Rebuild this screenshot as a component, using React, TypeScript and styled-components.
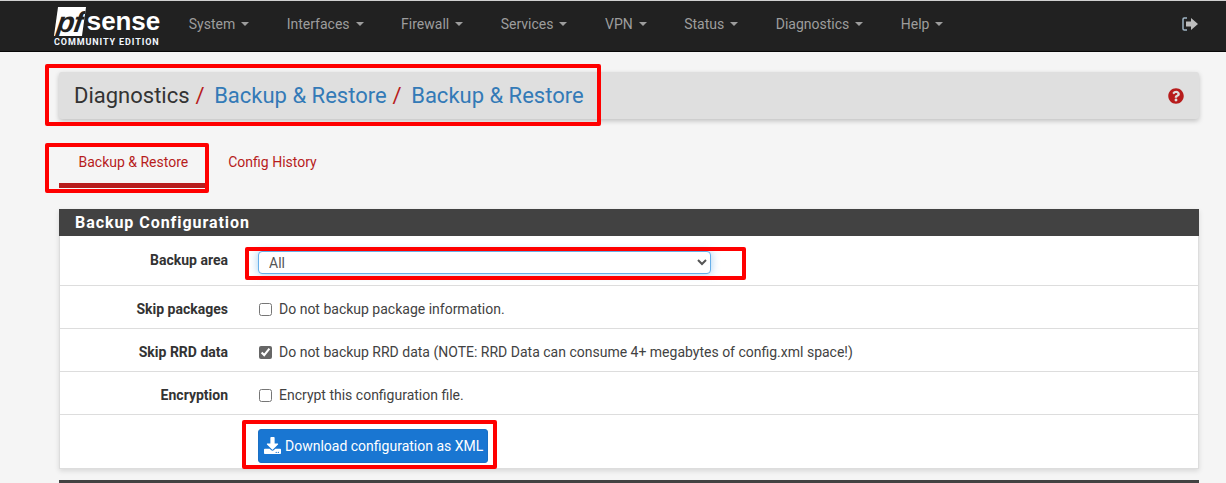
import React from 'react';
import styled, { createGlobalStyle } from 'styled-components';
import { FaDownload, FaQuestionCircle } from 'react-icons/fa';

const GlobalStyle = createGlobalStyle`
    html, body {
        margin: 0;
        padding: 0;
        background: #f5f5f5;
        font-family: Roboto, "Liberation Sans", sans-serif;
        font-size: 14px;
        color: #333;
        overflow: hidden;
    }
`;

const Page = styled.div`
    position: relative;
    width: 1226px;
    height: 483px;
    overflow: hidden;
`;

const Navbar = styled.nav`
    display: flex;
    align-items: center;
    box-sizing: border-box;
    height: 51px;
    margin-top: 1px;
    padding: 0 27px 4px 54px;
    background: #212121;
    border-bottom: 1px solid #080808;
    box-shadow: 0 -1px 0 #d0d0d0;
`;

const Logo = styled.div`
    display: flex;
    flex-direction: column;
    width: 106px;
    margin: 6px 10px 0 0;
    color: #fff;
`;

const LogoTop = styled.div`
    display: flex;
    align-items: center;
    height: 29px;
    padding-left: 2px;
`;

const LogoBox = styled.span`
    display: flex;
    align-items: center;
    justify-content: center;
    width: 28px;
    height: 29px;
    overflow: hidden;
    background: #fff;
    color: #212121;
    font: italic 700 29px/26px "Liberation Sans", sans-serif;
    letter-spacing: -1px;
    transform: skewX(-8deg);
`;

const LogoWord = styled.span`
    margin-left: 3px;
    font: 700 26px/28px "Liberation Sans", sans-serif;
    letter-spacing: -0.1px;
`;

const LogoEdition = styled.div`
    margin-top: 1px;
    font: 700 9px/11px Roboto, sans-serif;
    letter-spacing: 0.9px;
    white-space: nowrap;
    color: #f2f8ff;
`;

const NavItem = styled.a`
    display: flex;
    align-items: center;
    margin: 0 18.75px;
    color: #9d9d9d;
    font-size: 14px;
    line-height: 20px;
    white-space: nowrap;
`;

const Caret = styled.span`
    width: 0;
    height: 0;
    margin-left: 6px;
    border-top: 4px solid #9d9d9d;
    border-left: 4px solid transparent;
    border-right: 4px solid transparent;
`;

const NavSpacer = styled.div`
    flex: 1;
`;

const SignOut = styled.svg`
    width: 17px;
    height: 14px;
`;

const Content = styled.main`
    padding: 20px 27px 0 59px;
`;

const Breadcrumb = styled.div`
    display: flex;
    align-items: center;
    height: 47px;
    padding: 0 15px;
    background: #dfdfdf;
    border-radius: 3px;
    box-shadow: 0 2px 5px rgba(0, 0, 0, 0.22);
    font-size: 22px;
    white-space: nowrap;
`;

const Crumb = styled.span`
    color: #333;
`;

const CrumbLink = styled.a`
    margin-left: 9.5px;
    color: #337ab7;
`;

const Slash = styled.span`
    margin-left: 6px;
    color: #b71c1c;
`;

const HelpIcon = styled(FaQuestionCircle)`
    margin-left: auto;
    width: 16px;
    height: 16px;
    color: #b71c1c;
`;

const Tabs = styled.div`
    display: flex;
    height: 50px;
    margin-top: 19px;
`;

const Tab = styled.a<{ $active?: boolean }>`
    box-sizing: border-box;
    height: 50px;
    padding: 0 19.5px;
    font-size: 14px;
    line-height: 49px;
    color: #b71c1c;
    border-bottom: 5px solid ${({ $active }) => ($active ? '#b71c1c' : 'transparent')};
    & + & {
        margin-left: 1px;
    }
`;

const Panel = styled.section`
    margin-top: 21px;
    background: #fff;
    border: 1px solid #ddd;
    border-top: 0;
    box-shadow: 0 2px 5px rgba(0, 0, 0, 0.12);
`;

const PanelHeading = styled.h2`
    box-sizing: border-box;
    height: 27px;
    margin: 0 -1px;
    padding: 0 16px;
    background: #424242;
    color: #fff;
    font-size: 16px;
    font-weight: 700;
    line-height: 28px;
    letter-spacing: 0.95px;
`;

const Row = styled.div<{ $height: number; $top?: number; $bottom?: number }>`
    display: grid;
    grid-template-columns: 168px 1fr;
    column-gap: 31px;
    align-items: center;
    box-sizing: border-box;
    height: ${({ $height }) => $height}px;
    padding: ${({ $top }) => $top ?? 0}px 0 ${({ $bottom }) => $bottom ?? 0}px;
    & + & {
        border-top: 1px solid #ddd;
    }
`;

const Label = styled.label`
    justify-self: end;
    font-size: 14px;
    font-weight: 700;
    color: #333;
    white-space: nowrap;
`;

const Field = styled.div`
    display: flex;
    align-items: center;
    font-size: 14px;
    color: #424242;
    white-space: nowrap;
`;

const AreaSelect = styled.select`
    box-sizing: border-box;
    width: 453px;
    height: 23px;
    margin: 6px 0 0 -1px;
    padding: 0 6px;
    background-color: #fff;
    border: 1px solid #66afe9;
    border-radius: 4px;
    box-shadow: 0 0 8px rgba(102, 175, 233, 0.6);
    color: #555;
    font-family: inherit;
    font-size: 14px;
    outline: none;
`;

const Check = styled.input.attrs({ type: 'checkbox' })`
    width: 13px;
    height: 13px;
    margin: 1px 7px 0 0;
    accent-color: #666;
`;

const DownloadButton = styled.button`
    display: flex;
    align-items: center;
    gap: 4px;
    box-sizing: border-box;
    height: 34px;
    margin-left: -1px;
    padding: 0 4px 0 5px;
    background: #1976d2;
    border: 1px solid #1a6fc4;
    border-radius: 3px;
    color: #fff;
    font-family: inherit;
    font-size: 14px;
    white-space: nowrap;
    svg {
        width: 17px;
        height: 17px;
    }
`;

const NextPanel = styled.div`
    height: 10px;
    margin-top: 11px;
    background: #424242;
`;

const Marker = styled.div<{ $x: number; $y: number; $w: number; $h: number }>`
    position: absolute;
    left: ${({ $x }) => $x}px;
    top: ${({ $y }) => $y}px;
    width: ${({ $w }) => $w}px;
    height: ${({ $h }) => $h}px;
    box-sizing: border-box;
    border: 4px solid #ff0000;
    border-radius: 2px;
    pointer-events: none;
`;

const menu = ['System', 'Interfaces', 'Firewall', 'Services', 'VPN', 'Status', 'Diagnostics', 'Help'];

export default function App() {
    return (
        <Page>
            <GlobalStyle />
            <Navbar>
                <Logo>
                    <LogoTop>
                        <LogoBox>pf</LogoBox>
                        <LogoWord>sense</LogoWord>
                    </LogoTop>
                    <LogoEdition>COMMUNITY EDITION</LogoEdition>
                </Logo>
                {menu.map((item) => (
                    <NavItem key={item}>
                        {item}
                        <Caret />
                    </NavItem>
                ))}
                <NavSpacer />
                <SignOut viewBox="0 0 17 14">
                    <path d="M5 1H2.2C1.5 1 1 1.5 1 2.2v9.6C1 12.5 1.5 13 2.2 13H5" fill="none" stroke="#9fb4c4" strokeWidth="1.5" />
                    <path d="M4 4.500h5V1l7 6-7 6V9.500H4z" fill="#bdbdbd" />
                </SignOut>
            </Navbar>

            <Content>
                <Breadcrumb>
                    <Crumb>Diagnostics</Crumb>
                    <Slash>/</Slash>
                    <CrumbLink>Backup &amp; Restore</CrumbLink>
                    <Slash>/</Slash>
                    <CrumbLink>Backup &amp; Restore</CrumbLink>
                    <HelpIcon />
                </Breadcrumb>

                <Tabs>
                    <Tab $active>Backup &amp; Restore</Tab>
                    <Tab>Config History</Tab>
                </Tabs>

                <Panel>
                    <PanelHeading>Backup Configuration</PanelHeading>
                    <Row $height={49} $bottom={2}>
                        <Label>Backup area</Label>
                        <Field>
                            <AreaSelect defaultValue="All">
                                <option>All</option>
                            </AreaSelect>
                        </Field>
                    </Row>
                    <Row $height={43} $top={4}>
                        <Label>Skip packages</Label>
                        <Field>
                            <Check />
                            Do not backup package information.
                        </Field>
                    </Row>
                    <Row $height={43} $top={4}>
                        <Label>Skip RRD data</Label>
                        <Field>
                            <Check defaultChecked />
                            Do not backup RRD data (NOTE: RRD Data can consume 4+ megabytes of config.xml space!)
                        </Field>
                    </Row>
                    <Row $height={43} $top={4}>
                        <Label>Encryption</Label>
                        <Field>
                            <Check />
                            Encrypt this configuration file.
                        </Field>
                    </Row>
                    <Row $height={54} $top={8}>
                        <span />
                        <Field>
                            <DownloadButton>
                                <FaDownload />
                                Download configuration as XML
                            </DownloadButton>
                        </Field>
                    </Row>
                </Panel>
                <NextPanel />
            </Content>

            <Marker $x={45} $y={64} $w={556} $h={62} />
            <Marker $x={45} $y={143} $w={164} $h={50} />
            <Marker $x={245} $y={247} $w={501} $h={33} />
            <Marker $x={242} $y={420} $w={255} $h={49} />
        </Page>
    );
}
